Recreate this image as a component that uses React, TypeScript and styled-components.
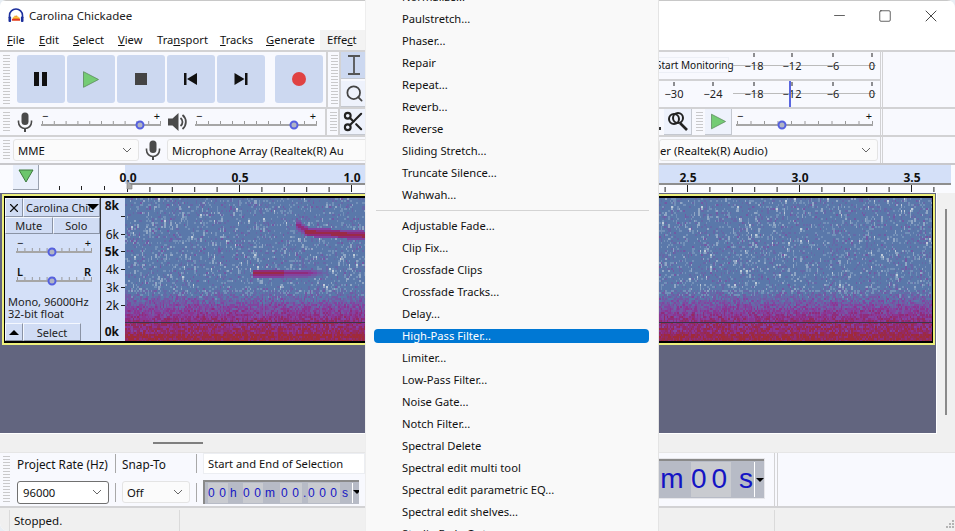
import { useMemo } from "react";
import type { ReactNode } from "react";
import styled, { createGlobalStyle } from "styled-components";
import { Scissors, Search, X, Minus, Square } from "lucide-react";

const GlobalStyle = createGlobalStyle`
  html, body {
    margin: 0;
    padding: 0;
    background: #e8eef4;
  }
  * {
    box-sizing: border-box;
  }
`;

const FONT = `"Noto Sans", "Open Sans", sans-serif`;
const PANEL = "#d4e0f8";
const BAR = "#f8f9fe";
const LINE = "#d2d2d4";

const Win = styled.div`
  position: relative;
  width: 955px;
  height: 531px;
  overflow: hidden;
  background: #fff;
  border-radius: 6px 8px 0 8px;
  font-family: ${FONT};
  font-size: 12px;
  color: #111;
  display: flex;
  flex-direction: column;
`;

const TitleBar = styled.div`
  height: 30px;
  flex: none;
  display: flex;
  align-items: center;
  padding: 0 0 0 8px;
  gap: 5px;
  border-top: 1px solid #c8c8c8;
`;

const TitleText = styled.span`
  font-size: 11.5px;
  flex: 1;
  color: #222;
`;

const WinButtons = styled.div`
  display: flex;
  color: #222;
  margin-right: 1px;
`;

const WinButton = styled.div`
  width: 46px;
  height: 28px;
  display: flex;
  align-items: center;
  justify-content: center;
`;

const MenuBar = styled.div`
  height: 20px;
  flex: none;
  display: flex;
  align-items: center;
  padding-left: 7px;
`;

const MenuName = styled.span<{ $w: number; $hover?: boolean }>`
  width: ${(p) => p.$w}px;
  height: 20px;
  line-height: 20px;
  font-size: 11.2px;
  flex: none;
  ${(p) => p.$hover && "background: #f3f3f3; padding-left: 7px;"}
  u {
    text-underline-offset: 1px;
  }
`;

const Row = styled.div<{ $h: number }>`
  height: ${(p) => p.$h}px;
  flex: none;
  display: flex;
  background: ${BAR};
  border-top: 2px solid ${LINE};
`;

const LeftCol = styled.div`
  width: 365px;
  flex: none;
  display: flex;
  align-items: center;
  overflow: hidden;
`;

const MenuGap = styled.div`
  width: 294px;
  flex: none;
`;

const RightCol = styled.div`
  width: 221px;
  flex: none;
  display: flex;
  align-items: center;
  overflow: hidden;
`;

const Tail = styled.div`
  flex: 1;
  height: 100%;
  border-left: 3px double ${LINE};
`;

const Grip = styled.div<{ $ml?: number }>`
  width: 7px;
  flex: none;
  align-self: stretch;
  margin: 3px 0 3px ${(p) => p.$ml ?? 3}px;
  background: repeating-linear-gradient(
    to bottom,
    #c9c9cb 0,
    #c9c9cb 1px,
    transparent 1px,
    transparent 3px
  );
`;

const Divider = styled.div<{ $ml: number; $mr: number }>`
  width: 2px;
  flex: none;
  align-self: stretch;
  margin-left: ${(p) => p.$ml}px;
  margin-right: ${(p) => p.$mr}px;
  background: ${LINE};
`;

const Transport = styled.div`
  display: flex;
  gap: 2px;
  margin: 0 0 1px 7px;
`;

const TransportButton = styled.div<{ $gap?: number }>`
  width: 48px;
  height: 48px;
  border-radius: 3px;
  background: #ccd8f0;
  display: flex;
  align-items: center;
  justify-content: center;
  margin-left: ${(p) => p.$gap ?? 0}px;
`;

const ToolColumn = styled.div`
  display: flex;
  flex-direction: column;
  gap: 2px;
  align-self: stretch;
`;

const ToolButton = styled.div<{ $on?: boolean; $w?: number; $h?: number; $ml?: number }>`
  width: ${(p) => p.$w ?? 27}px;
  height: ${(p) => p.$h ?? 26}px;
  margin-left: ${(p) => p.$ml ?? 0}px;
  flex: none;
  display: flex;
  align-items: center;
  justify-content: center;
  background: ${(p) => (p.$on ? "#ccd8f0" : "#eef2fc")};
  border-right: 1px solid #c4c8d0;
  border-bottom: 1px solid #c4c8d0;
  color: #333;
`;

const CutGlyph = styled.div`
  width: 2px;
  height: 3px;
  margin-top: 12px;
  flex: none;
  background: #333;
`;

const IconSlot = styled.div<{ $w: number; $ml: number }>`
  width: ${(p) => p.$w}px;
  margin-left: ${(p) => p.$ml}px;
  flex: none;
  display: flex;
  justify-content: center;
`;

const Select = styled.div<{ $w: number; $ml?: number; $dark?: boolean; $pl?: number }>`
  width: ${(p) => p.$w}px;
  height: ${(p) => (p.$dark ? 23 : 22)}px;
  margin-left: ${(p) => p.$ml ?? 0}px;
  flex: none;
  display: flex;
  align-items: center;
  justify-content: space-between;
  padding: 0 6px 0 ${(p) => p.$pl ?? 4}px;
  background: ${(p) => (p.$dark ? "#fff" : "#fbfbfb")};
  border: 1px solid ${(p) => (p.$dark ? "#707070" : "#e4e4e4")};
  border-radius: 3px;
  font-size: 11.3px;
  white-space: nowrap;
  overflow: hidden;
`;

const RulerRow = styled.div`
  height: 30px;
  flex: none;
  display: flex;
  background: #fafbff;
  border-top: 2px solid #c8c8cc;
`;

const RulerButton = styled.div`
  width: 26px;
  height: 25px;
  margin-left: 13px;
  flex: none;
  display: flex;
  justify-content: center;
  padding-top: 4px;
  background: #eaf0fc;
  border-right: 1px solid #9aa2b0;
  border-bottom: 1px solid #9aa2b0;
`;

const Workspace = styled.div`
  height: 241px;
  flex: none;
  display: flex;
  background: #f0f0f0;
`;

const TrackArea = styled.div`
  width: 937px;
  flex: none;
  background: #62657f;
  border-right: 1px solid #fff;
  padding: 1px 0 0 2px;
  border-bottom: 1px solid #fff;
`;

const Gutter = styled.div`
  flex: 1;
  padding: 16px 0 0 8px;
`;

const ScrollThumb = styled.div`
  width: 2px;
  height: 206px;
  background: #8a8a8a;
`;

const TrackFrame = styled.div`
  width: 933px;
  height: 151px;
  border: 2px solid #eef07c;
`;

const TrackInner = styled.div`
  height: 147px;
  display: flex;
  background: #000;
  border-style: solid;
  border-color: #000;
  border-width: 2px 1px 2px 1px;
`;

const TrackPanel = styled.div`
  width: 96px;
  flex: none;
  background: ${PANEL};
  border-right: 1px solid #333;
  display: flex;
  flex-direction: column;
  font-size: 11px;
  color: #222;
`;

const PanelRow = styled.div<{ $h: number }>`
  height: ${(p) => p.$h}px;
  flex: none;
  display: flex;
`;

const PanelButton = styled.div<{ $w?: number }>`
  ${(p) => (p.$w ? `width: ${p.$w}px; flex: none;` : "flex: 1;")}
  min-width: 0;
  display: flex;
  align-items: center;
  justify-content: center;
  background: #d0dcf4;
  border-style: solid;
  border-width: 1px;
  border-color: #f4f8ff #8a93a5 #8a93a5 #f4f8ff;
  white-space: nowrap;
  overflow: hidden;
`;

const TrackName = styled(PanelButton)`
  justify-content: flex-start;
  padding: 0 0 0 2px;
  position: relative;
`;

const Arrow = styled.span<{ $up?: boolean; $size?: number }>`
  width: 0;
  height: 0;
  flex: none;
  border-left: ${(p) => p.$size ?? 6}px solid transparent;
  border-right: ${(p) => p.$size ?? 6}px solid transparent;
  ${(p) => (p.$up ? "border-bottom" : "border-top")}: ${(p) => p.$size ?? 6}px solid #000;
`;

const NameArrow = styled(Arrow)`
  position: absolute;
  right: 0;
  top: 5px;
`;

const SliderSlot = styled.div<{ $mt?: number }>`
  flex: none;
  margin: ${(p) => p.$mt ?? 3}px 0 0 11px;
  height: 24px;
`;

const TrackInfo = styled.div`
  flex: 1;
  display: flex;
  flex-direction: column;
  justify-content: flex-end;
  padding: 0 0 3px 3px;
  line-height: 12px;
  font-size: 11px;
`;

const Strip = styled.div`
  height: 18px;
  flex: none;
  background: #f0f0f0;
  display: flex;
  justify-content: flex-start;
  padding: 8px 0 0 153px;
`;

const StripHandle = styled.div`
  width: 50px;
  height: 2px;
  background: #7f7f7f;
`;

const BottomBar = styled.div`
  height: 56px;
  flex: none;
  display: flex;
  background: ${BAR};
  border-bottom: 2px solid ${LINE};
  border-top: 1px solid #e6e6e6;
`;

const BottomGrid = styled.div`
  width: 348px;
  flex: none;
  margin-left: 7px;
  display: grid;
  grid-template-columns: 92px 1px 68px 1px 1fr;
  grid-template-rows: 21px 24px;
  column-gap: 6px;
  row-gap: 6px;
  align-items: center;
  align-content: start;
  overflow: hidden;
`;

const BarLabel = styled.span`
  font-size: 11.8px;
  white-space: nowrap;
`;

const SelectionLabel = styled.div`
  height: 21px;
  display: flex;
  align-items: center;
  padding-left: 4px;
  background: #fff;
  border: 1px solid #eceef2;
  font-size: 11.2px;
  white-space: nowrap;
  overflow: hidden;
`;

const VSep = styled.div`
  width: 1px;
  height: 19px;
  background: #a8a8a8;
`;

const TimeBox = styled.div`
  width: 156px;
  height: 24px;
  display: flex;
  align-items: center;
  padding-left: 3px;
  background: #b7bbc6;
  border-top: 2px solid #8a8a8a;
  border-left: 2px solid #8a8a8a;
  color: #1414c4;
  font-family: "Liberation Sans", sans-serif;
  font-size: 12px;
  overflow: hidden;
`;

const TimeCell = styled.span<{ $on?: boolean; $w: number; $pl?: number }>`
  width: ${(p) => p.$w}px;
  height: 20px;
  line-height: 20px;
  flex: none;
  white-space: nowrap;
  overflow: hidden;
  letter-spacing: ${(p) => (p.$on ? 4.500 : 0)}px;
  padding-left: ${(p) => p.$pl ?? 0}px;
  background: ${(p) => (p.$on ? "#c9cbd0" : "transparent")};
`;

const TimeDrop = styled.div`
  margin-left: auto;
  width: 9px;
  height: 20px;
  padding: 7px 0 0 0;
  border-left: 1px solid #fff;
  display: flex;
`;

const BigTime = styled.div`
  width: 105px;
  height: 39px;
  margin-top: 6px;
  flex: none;
  display: flex;
  align-items: center;
  background: #b7bbc6;
  border-top: 2px solid #8a8a8a;
  outline: 1px solid #e6e6ea;
  color: #1414c4;
  font-family: "Liberation Sans", sans-serif;
  font-size: 28px;
`;

const BigCell = styled.span<{ $on?: boolean; $w: number; $pl?: number; $pr?: number }>`
  width: ${(p) => p.$w}px;
  height: 35px;
  line-height: 34px;
  flex: none;
  padding: 0 ${(p) => p.$pr ?? 0}px 0 ${(p) => p.$pl ?? 0}px;
  letter-spacing: ${(p) => (p.$on ? 5 : 0)}px;
  text-align: center;
  background: ${(p) => (p.$on ? "#c9cbd0" : "transparent")};
`;

const BigDrop = styled.div`
  margin-left: auto;
  width: 10px;
  height: 35px;
  border-left: 1px solid #fff;
  padding: 16px 0 0 1px;
  display: flex;
`;

const BottomTail = styled.div`
  width: 11px;
  flex: none;
  border-right: 1px solid ${LINE};
`;

const BottomEnd = styled.div`
  flex: 1;
  margin-left: 2px;
  border-left: 1px solid ${LINE};
`;

const StatusBar = styled.div`
  flex: 1;
  display: flex;
  background: #f0f0f0;
  font-size: 11.5px;
  position: relative;
`;

const StatusCell = styled.div<{ $w: number; $pl?: number }>`
  width: ${(p) => p.$w}px;
  flex: none;
  padding: 3px 0 0 ${(p) => p.$pl ?? 4}px;
  margin-top: 2px;
  border-right: 1px solid #dadada;
`;

const ResizeGrip = styled.svg`
  position: absolute;
  right: 0;
  bottom: 0;
`;

/* the open Effect menu, lies over everything */
const Menu = styled.div`
  position: absolute;
  left: 365px;
  top: -14px;
  width: 294px;
  height: 560px;
  background: #f9f9f9;
  border-left: 1px solid #eee;
  border-right: 1px solid #e4e4e4;
  padding: 0 9px 0 8px;
  z-index: 5;
`;

const MenuItem = styled.div`
  height: 22px;
  display: flex;
  align-items: center;
  font-size: 11.2px;
  color: #111;
`;

const MenuLabel = styled.div<{ $active?: boolean }>`
  width: 100%;
  height: 14px;
  line-height: 14px;
  padding-left: 28px;
  border-radius: 4px;
  white-space: nowrap;
  ${(p) => p.$active && "background: #0078d4; color: #fff;"}
`;

const MenuSep = styled.div`
  height: 9px;
  display: flex;
  align-items: center;
  &::after {
    content: "";
    width: 100%;
    height: 1px;
    margin-left: 2px;
    background: #d4d4d4;
  }
`;

const MeterWrap = styled.div<{ $first?: boolean }>`
  position: relative;
  height: ${(p) => (p.$first ? 27 : 28)}px;
  border-top: ${(p) => (p.$first ? "none" : `2px solid ${LINE}`)};
`;

const MonitorTag = styled.span`
  position: absolute;
  left: -3px;
  top: 5px;
  width: 73px;
  height: 16px;
  line-height: 15px;
  font-size: 10px;
  text-align: right;
  white-space: nowrap;
  background: ${BAR};
  border: 1px solid #eceff6;
  border-left: none;
  padding-right: 1px;
`;

const MeterStack = styled.div`
  width: 100%;
  align-self: stretch;
  display: flex;
  flex-direction: column;
`;

const LeftRuler = styled.svg`
  flex: none;
`;

const MENU_ITEMS = [
  "Normalize...", "Paulstretch...", "Phaser...", "Repair", "Repeat...", "Reverb...", "Reverse",
  "Sliding Stretch...", "Truncate Silence...", "Wahwah...", "-", "Adjustable Fade...", "Clip Fix...",
  "Crossfade Clips", "Crossfade Tracks...", "Delay...", "High-Pass Filter...", "Limiter...",
  "Low-Pass Filter...", "Noise Gate...", "Notch Filter...", "Spectral Delete",
  "Spectral edit multi tool", "Spectral edit parametric EQ...", "Spectral edit shelves...",
  "Studio Fade Out",
];

const MENUS: [string, string, string, number][] = [
  ["", "F", "ile", 32],
  ["", "E", "dit", 34],
  ["", "S", "elect", 45],
  ["", "V", "iew", 39],
  ["Tra", "n", "sport", 63],
  ["", "T", "racks", 46],
  ["", "G", "enerate", 54],
];

function Logo() {
  return (
    <svg width="16" height="16" viewBox="0 0 16 16">
      <path d="M1.5 10V7.5a6.5 6.5 0 0 1 13 0V10" fill="none" stroke="#1c2f9c" strokeWidth="1.6" />
      <rect x="0.5" y="8.5" width="2.6" height="5.5" rx="1" fill="#1c2f9c" />
      <rect x="12.9" y="8.5" width="2.6" height="5.5" rx="1" fill="#1c2f9c" />
      <path d="M4 12.5h8V11l-1-2-1 .6L8.8 7 8 8.5 7 7.2 5.8 9.6 5 9z" fill="#f28a1e" />
      <rect x="4" y="11" width="8" height="1.6" fill="#e2322a" />
      <rect x="5" y="8.8" width="6" height="1" fill="#f7d34a" />
    </svg>
  );
}

function MicIcon({ color = "#4a4a4a" }: { color?: string }) {
  return (
    <svg width="16" height="20" viewBox="0 0 16 20">
      <rect x="4.5" y="0.5" width="7" height="12.5" rx="3.5" fill={color} />
      <path d="M1.5 8.5v1.5a6.5 6.5 0 0 0 13 0V8.5" fill="none" stroke={color} strokeWidth="1.6" />
      <path d="M8 16.5V20" stroke={color} strokeWidth="2" />
    </svg>
  );
}

function SpeakerIcon() {
  return (
    <svg width="20" height="20" viewBox="0 0 20 20">
      <path d="M1 6.5h4.5L11.5 1v18l-6-5.500H1z" fill="#4a4a4a" />
      <path d="M13.500 6a5 5 0 0 1 0 8" fill="none" stroke="#4a4a4a" strokeWidth="1.8" />
      <path d="M15.500 3a9 9 0 0 1 0 14" fill="none" stroke="#4a4a4a" strokeWidth="1.8" />
    </svg>
  );
}

function PlayIcon({ w = 16, h = 17 }: { w?: number; h?: number }) {
  return (
    <svg width={w} height={h} viewBox="0 0 16 17">
      <path d="M0.500 0.700L15.500 8.500 0.500 16.300z" fill="#74cc74" stroke="#5a8a5a" strokeWidth="0.800" />
    </svg>
  );
}

function ZoomFitIcon() {
  return (
    <svg width="22" height="22" viewBox="0 0 22 22" fill="none" stroke="#222" strokeWidth="2">
      <circle cx="7" cy="8" r="5" />
      <circle cx="11" cy="7" r="5" />
      <path d="M13 12l7 7" strokeWidth="2.600" />
    </svg>
  );
}

function IBeam() {
  return (
    <svg width="14" height="20" viewBox="0 0 14 20" stroke="#555" strokeWidth="1.800" fill="none">
      <path d="M1 1h12M1 19h12M7 1v18" />
    </svg>
  );
}

function Chevron() {
  return (
    <svg width="10" height="6" viewBox="0 0 10 6" fill="none" stroke="#666" strokeWidth="1" style={{ flex: "none" }}>
      <path d="M1 1l4 4 4-4" />
    </svg>
  );
}

/* slider with tick marks, thumb is a ring as in Audacity */
function Slider({
  w,
  thumb,
  left = "−",
  right = "+",
  bold,
}: {
  w: number;
  thumb: number;
  left?: string;
  right?: string;
  bold?: boolean;
}) {
  const ticks = [];
  for (let i = 0; i <= 10; i++) ticks.push(1 + ((w - 2) * i) / 10);
  return (
    <svg width={w} height="24" viewBox={`0 0 ${w} 24`} style={{ flex: "none" }}>
      <text x="1" y="10" fontSize="11" fontWeight={bold ? 600 : 400} fill="#111" fontFamily={FONT}>
        {left}
      </text>
      <text x={w - 1} y="10" textAnchor="end" fontSize="11" fontWeight={bold ? 600 : 400} fill="#111" fontFamily={FONT}>
        {right}
      </text>
      {ticks.map((t) => (
        <rect key={t} x={t} y="11" width="1" height="3" fill="#999" />
      ))}
      <rect x="0" y="14" width={w} height="2" fill="#a6a6a6" />
      <circle cx={thumb} cy="15" r="3.500" fill="#b0b4c4" stroke="#5560e0" strokeWidth="2" />
    </svg>
  );
}

/* dB ruler of the level meters */
function Meter({
  labels,
  marker,
  first,
  labelY,
  children,
}: {
  labels: [string, number][];
  marker?: number;
  first?: boolean;
  labelY: number;
  children?: ReactNode;
}) {
  return (
    <MeterWrap $first={first}>
      <svg width="221" height="26" viewBox="0 0 221 26">
        <rect x="74" y={labelY - 5} width="143" height="1" fill="#bbb" />
        {labels.map(([t, x]) => (
          <g key={t}>
            <rect x={x - 0.500} y="1" width="1" height="4" fill="#222" />
            <text x={x} y={labelY} textAnchor="middle" fontSize="11" fill="#222" fontFamily={FONT}>
              {t}
            </text>
          </g>
        ))}
        {marker !== undefined && <rect x={marker} y="0" width="2" height="26" fill="#5a66e0" />}
      </svg>
      {children}
    </MeterWrap>
  );
}

function Ruler() {
  const width = 837;
  const ox = 12;
  const ticks = [];
  for (let i = 0; ox + i * 22.4 < width - 3; i++) ticks.push(i);
  // 1.5 and 2.0 lie under the open menu
  const labels: [string, number][] = [
    ["0.0", 0],
    ["0.5", 112],
    ["1.0", 224],
    ["2.5", 560],
    ["3.0", 672],
    ["3.5", 784],
  ];
  return (
    <svg width={width} height="28" viewBox={`0 0 ${width} 28`} style={{ flex: "none" }}>
      <rect x="10" y="0" width={width - 11} height="19" fill={PANEL} />
      <rect x={ox} y="18" width={width - 13} height="2" fill="#8e8e8e" />
      {ticks.map((i) => (
        <rect key={i} x={ox + i * 22.4} y={i % 5 === 0 ? 20 : 22} width="1" height={i % 5 === 0 ? 7 : 5} fill="#222" />
      ))}
      {labels.map(([t, x]) => (
        <text key={t} x={ox + 1 + x} y="16.500" textAnchor="middle" fontSize="12" fontWeight="700" fill="#111" fontFamily={FONT}>
          {t}
        </text>
      ))}
      <path d="M12 16l5 4v4h-5z" fill="#aaa" stroke="#777" strokeWidth="0.600" />
    </svg>
  );
}

function FreqScale() {
  const rows: [string, number, boolean][] = [
    ["8k", 12, true],
    ["6k", 41, false],
    ["5k", 58, true],
    ["4k", 76, false],
    ["3k", 94, false],
    ["2k", 112, false],
    ["0k", 138, true],
  ];
  return (
    <svg width="24" height="143" viewBox="0 0 24 143" style={{ flex: "none" }}>
      <rect width="24" height="143" fill={PANEL} />
      {[22, 40, 57, 75, 93, 111].map((y) => (
        <rect key={y} x="20" y={y - 4} width="4" height="1" fill="#222" />
      ))}
      {rows.map(([t, y, b]) => (
        <text key={t} x="18" y={y} textAnchor="end" fontSize="12" fontWeight={b ? 700 : 400} fill="#111" fontFamily={FONT}>
          {t}
        </text>
      ))}
    </svg>
  );
}

const PALETTE = [
  "#c0ccd8", "#90a6c4", "#7390b8", "#5a78aa", "#6668a8", "#7458a4",
  "#8244a0", "#8c3592", "#8f2c7c", "#942a60", "#9a2a48", "#a02a38",
];
const BASE_IDX = 3;

function rng(seed: number) {
  let a = seed;
  return () => {
    a |= 0;
    a = (a + 0x6d2b79f5) | 0;
    let t = Math.imul(a ^ (a >>> 15), 1 | a);
    t = (t + Math.imul(t ^ (t >>> 7), 61 | t)) ^ t;
    return ((t ^ (t >>> 14)) >>> 0) / 4294967296;
  };
}

function segDist(px: number, py: number, ax: number, ay: number, bx: number, by: number) {
  const dx = bx - ax;
  const dy = by - ay;
  const t = Math.max(0, Math.min(1, ((px - ax) * dx + (py - ay) * dy) / (dx * dx + dy * dy)));
  return Math.hypot(px - ax - dx * t, py - ay - dy * t);
}

function halo(d: number) {
  if (d < 1.5) return 0.88;
  if (d < 3) return 0.72;
  if (d < 4.5) return 0.56;
  return 0;
}

function callEnergy(x: number, y: number) {
  let e = 0;
  if (x > 127 && x < 205) {
    const fade = x < 158 ? 1 : x < 180 ? 0.8 : 0.8 * (1 - (x - 180) / 40);
    const h = halo(Math.abs(y - 74.5));
    e = Math.max(e, h * fade);
  }
  if (x > 170) {
    const d = Math.min(segDist(x, y, 172, 26, 181, 33), segDist(x, y, 181, 33, 245, 37));
    e = Math.max(e, x < 180 ? halo(d) * 0.8 : halo(d));
  }
  return e;
}

function Spectrogram() {
  const W = 807;
  const H = 143;
  const paths = useMemo(() => {
    const r = rng(7731);
    const out: string[] = PALETTE.map(() => "");
    const CW = 1.5;
    const CH = 2;
    const rowNoise: number[] = [];
    for (let cy = 0; cy * CH < H; cy++) rowNoise.push((r() - 0.5) * 0.1);
    for (let cx = 0; cx * CW < W; cx++) {
      const col = (r() - 0.5) * 0.05;
      let speck = 0;
      for (let cy = 0; cy * CH < H; cy++) {
        const x = cx * CW;
        const y = cy * CH;
        let e = 0.29;
        if (y >= 92 && y < 124) {
          e = 0.29 + ((y - 92) / 32) * 0.42 + (r() - 0.5) * 0.26 + col;
        } else if (y >= 124) {
          e = (y > 134 ? 0.84 : 0.72) + rowNoise[cy] + (r() - 0.5) * 0.34 + col;
        } else {
          const roll = r();
          if (speck > 0) {
            e = 0.1;
            speck--;
          } else if (roll < 0.006) {
            e = 0.02;
            speck = 1;
          } else if (roll < 0.035) {
            e = 0.1;
            speck = r() < 0.35 ? 1 : 0;
          } else if (roll < 0.15) {
            e = 0.2;
          } else if (roll < 0.25) {
            e = 0.36;
          } else if (roll < 0.275) {
            e = 0.45;
          }
        }
        e = Math.max(e, callEnergy(x, y));
        const idx = Math.min(PALETTE.length - 1, Math.max(0, Math.floor(e * 12)));
        if (idx !== BASE_IDX) out[idx] += `M${x} ${y}h${CW}v${CH}h-${CW}z`;
      }
    }
    return out;
  }, []);
  return (
    <svg width={W} height={H} viewBox={`0 0 ${W} ${H}`} shapeRendering="crispEdges" style={{ flex: "none" }}>
      <rect width={W} height={H} fill={PALETTE[BASE_IDX]} />
      {paths.map((d, i) => (d ? <path key={i} d={d} fill={PALETTE[i]} /> : null))}
      <rect x="0" y="124" width={W} height="1" fill="#3a3648" />
    </svg>
  );
}

export default function App() {
  return (
    <>
      <GlobalStyle />
      <Win>
        <TitleBar>
          <Logo />
          <TitleText>Carolina Chickadee</TitleText>
          <WinButtons>
            <WinButton>
              <Minus size={17} strokeWidth={1} />
            </WinButton>
            <WinButton>
              <Square size={14} strokeWidth={1.2} />
            </WinButton>
            <WinButton>
              <X size={20} strokeWidth={1} />
            </WinButton>
          </WinButtons>
        </TitleBar>

        <MenuBar>
          {MENUS.map(([a, u, b, w]) => (
            <MenuName key={u + b} $w={w}>
              {a}
              <u>{u}</u>
              {b}
            </MenuName>
          ))}
          <MenuName $w={45} $hover>
            Effe<u>c</u>t
          </MenuName>
        </MenuBar>

        <Row $h={57}>
          <LeftCol>
            <Grip />
            <Transport>
              <TransportButton>
                <svg width="14" height="14" viewBox="0 0 14 14" fill="#111">
                  <rect x="0" y="0" width="5" height="14" />
                  <rect x="8" y="0" width="5" height="14" />
                </svg>
              </TransportButton>
              <TransportButton>
                <PlayIcon />
              </TransportButton>
              <TransportButton>
                <svg width="12" height="12" viewBox="0 0 12 12">
                  <rect width="12" height="12" fill="#444" />
                </svg>
              </TransportButton>
              <TransportButton>
                <svg width="14" height="12" viewBox="0 0 14 12" fill="#111">
                  <rect x="0" y="0" width="2.500" height="12" />
                  <path d="M13 0v12L3 6z" />
                </svg>
              </TransportButton>
              <TransportButton>
                <svg width="14" height="12" viewBox="0 0 14 12" fill="#111">
                  <rect x="11" y="0" width="2.500" height="12" />
                  <path d="M0.500 0v12l10-6z" />
                </svg>
              </TransportButton>
              <TransportButton $gap={8}>
                <svg width="14" height="14" viewBox="0 0 14 14">
                  <circle cx="7" cy="7" r="7" fill="#e04242" />
                </svg>
              </TransportButton>
            </Transport>
            <Divider $ml={3} $mr={0} />
            <Grip />
            <Divider $ml={1} $mr={0} />
            <ToolColumn>
              <ToolButton $on $h={27}>
                <IBeam />
              </ToolButton>
              <ToolButton>
                <Search size={19} strokeWidth={2.2} color="#444" />
              </ToolButton>
            </ToolColumn>
          </LeftCol>
          <MenuGap />
          <RightCol>
            <MeterStack>
              <Meter first labelY={18} labels={[["−18", 95], ["−12", 133], ["−6", 174], ["0", 213]]} />
              <Meter
                labelY={17}
                labels={[["−30", 15], ["−24", 54], ["−18", 95], ["−12", 133], ["−6", 174], ["0", 213]]}
                marker={130}
              />
            </MeterStack>
            <MonitorSlot>
              <MonitorTag>Start Monitoring</MonitorTag>
            </MonitorSlot>
          </RightCol>
          <Tail />
        </Row>

        <Row $h={28}>
          <LeftCol>
            <Grip />
            <IconSlot $w={16} $ml={7}>
              <MicIcon />
            </IconSlot>
            <IconSlot $w={120} $ml={8}>
              <Slider w={120} thumb={99} />
            </IconSlot>
            <IconSlot $w={20} $ml={6}>
              <SpeakerIcon />
            </IconSlot>
            <IconSlot $w={122} $ml={8}>
              <Slider w={122} thumb={99} />
            </IconSlot>
            <Divider $ml={8} $mr={0} />
            <Grip />
            <Divider $ml={1} $mr={0} />
            <ToolButton>
              <Scissors size={23} strokeWidth={2.2} color="#222" />
            </ToolButton>
          </LeftCol>
          <MenuGap />
          <RightCol>
            <CutGlyph />
            <ToolButton $w={28} $ml={3}>
              <ZoomFitIcon />
            </ToolButton>
            <Grip $ml={4} />
            <ToolButton $w={27} $ml={2}>
              <PlayIcon w={15} h={17} />
            </ToolButton>
            <IconSlot $w={137} $ml={4}>
              <Slider w={137} thumb={46} />
            </IconSlot>
          </RightCol>
          <Tail />
        </Row>

        <Row $h={28}>
          <LeftCol>
            <Grip />
            <Select $w={126} $ml={3}>
              MME
              <Chevron />
            </Select>
            <IconSlot $w={16} $ml={6}>
              <MicIcon />
            </IconSlot>
            <Select $w={210} $ml={6}>
              Microphone Array (Realtek(R) Au
            </Select>
          </LeftCol>
          <MenuGap />
          <RightCol>
            <Select $w={219} $pl={0}>
              er (Realtek(R) Audio)
              <Chevron />
            </Select>
          </RightCol>
          <Tail />
        </Row>

        <RulerRow>
          <RulerButton>
            <svg width="16" height="14" viewBox="0 0 16 14">
              <path d="M1 1h14L8 13z" fill="#6cc66c" stroke="#3f7a3f" strokeWidth="1" />
            </svg>
          </RulerButton>
          <LeftRuler width="76" height="28" viewBox="0 0 76 28">
            {[20, 42, 65].map((x) => (
              <rect key={x} x={x} y="21" width="1" height="4" fill="#222" />
            ))}
          </LeftRuler>
          <Ruler />
        </RulerRow>

        <Workspace>
          <TrackArea>
            <TrackFrame>
              <TrackInner>
                <TrackPanel>
                  <PanelRow $h={19}>
                    <PanelButton $w={18}>
                      <X size={14} strokeWidth={2} color="#111" />
                    </PanelButton>
                    <TrackName>
                      Carolina Chic
                      <NameArrow />
                    </TrackName>
                  </PanelRow>
                  <PanelRow $h={17}>
                    <PanelButton>Mute</PanelButton>
                    <PanelButton>Solo</PanelButton>
                  </PanelRow>
                  <SliderSlot>
                    <Slider w={76} thumb={36} />
                  </SliderSlot>
                  <SliderSlot $mt={5}>
                    <Slider w={76} thumb={36} left="L" right="R" bold />
                  </SliderSlot>
                  <TrackInfo>
                    <span>Mono, 96000Hz</span>
                    <span>32-bit float</span>
                  </TrackInfo>
                  <PanelRow $h={18}>
                    <PanelButton $w={18}>
                      <Arrow $up $size={5} />
                    </PanelButton>
                    <PanelButton $w={58}>Select</PanelButton>
                  </PanelRow>
                </TrackPanel>
                <FreqScale />
                <Spectrogram />
              </TrackInner>
            </TrackFrame>
          </TrackArea>
          <Gutter>
            <ScrollThumb />
          </Gutter>
        </Workspace>

        <Strip>
          <StripHandle />
        </Strip>

        <BottomBar>
          <Grip />
          <BottomGrid>
            <BarLabel>Project Rate (Hz)</BarLabel>
            <VSep />
            <BarLabel>Snap-To</BarLabel>
            <VSep />
            <SelectionLabel>Start and End of Selection</SelectionLabel>
            <Select $w={92} $dark $pl={5}>
              96000
              <Chevron />
            </Select>
            <VSep />
            <Select $w={68}>
              Off
              <Chevron />
            </Select>
            <VSep />
            <TimeBox>
              <TimeCell $w={20} $on>00</TimeCell>
              <TimeCell $w={15} $pl={2}>h</TimeCell>
              <TimeCell $w={20} $on>00</TimeCell>
              <TimeCell $w={17} $pl={2}>m</TimeCell>
              <TimeCell $w={22} $on $pl={1}>00</TimeCell>
              <TimeCell $w={6} $pl={1}>.</TimeCell>
              <TimeCell $w={32} $on>000</TimeCell>
              <TimeCell $w={12} $pl={2}>s</TimeCell>
              <TimeDrop>
                <Arrow $size={4} />
              </TimeDrop>
            </TimeBox>
          </BottomGrid>
          <MenuGap />
          <BigTime>
            <BigCell $w={32} $pr={6}>m</BigCell>
            <BigCell $w={40} $on>00</BigCell>
            <BigCell $w={23} $pl={7}>s</BigCell>
            <BigDrop>
              <Arrow $size={4} />
            </BigDrop>
          </BigTime>
          <BottomTail />
          <BottomEnd />
        </BottomBar>

        <StatusBar>
          <StatusCell $w={10} $pl={0} />
          <StatusCell $w={170}>Stopped.</StatusCell>
          <StatusCell $w={595} />
          <ResizeGrip width="12" height="12" viewBox="0 0 12 12" fill="#b4b4b4">
            <rect x="9" y="1" width="2" height="2" />
            <rect x="6" y="4" width="2" height="2" />
            <rect x="9" y="4" width="2" height="2" />
            <rect x="3" y="7" width="2" height="2" />
            <rect x="6" y="7" width="2" height="2" />
            <rect x="9" y="7" width="2" height="2" />
          </ResizeGrip>
        </StatusBar>

        <Menu>
          {MENU_ITEMS.map((item) =>
            item === "-" ? (
              <MenuSep key={item} />
            ) : (
              <MenuItem key={item}>
                <MenuLabel $active={item === "High-Pass Filter..."}>{item}</MenuLabel>
              </MenuItem>
            ),
          )}
        </Menu>
      </Win>
    </>
  );
}

/* zero-width anchor: the Start Monitoring tag lies over the meter, partly under the menu */
const MonitorSlot = styled.div`
  position: absolute;
  left: 659px;
  top: 52px;
  width: 0;
  height: 0;
  z-index: 1;
`;
